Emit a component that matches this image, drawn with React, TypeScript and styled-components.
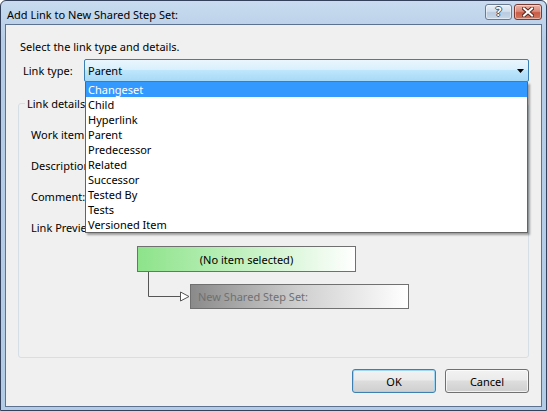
import styled, { createGlobalStyle } from "styled-components";

const GlobalStyle = createGlobalStyle`
  html, body {
    margin: 0;
    padding: 0;
    background: #ffffff;
  }
  body {
    font-family: "Noto Sans", "Segoe UI", sans-serif;
    font-size: 11px;
    color: #000;
  }
  * {
    box-sizing: border-box;
  }
`;

const Window = styled.div`
  width: 547px;
  height: 411px;
  display: flex;
  flex-direction: column;
  border: 1px solid #33425a;
  border-radius: 6px 6px 0 0;
  background: linear-gradient(#c8dbef, #b6cde7 40px, #b3cce6);
  padding: 0 4px 3px;
`;

const TitleBar = styled.div`
  height: 23px;
  display: flex;
  align-items: flex-start;
  padding: 3px 0 0 2px;
`;

const TitleText = styled.div`
  flex: 1;
  line-height: 15px;
  margin-top: 3px;
`;

const CaptionButtons = styled.div`
  display: flex;
  gap: 2px;
`;

const CaptionButton = styled.div<{ $close?: boolean }>`
  width: ${(p) => (p.$close ? 28 : 27)}px;
  height: 16px;
  border: 1px solid ${(p) => (p.$close ? "#7a3a31" : "#6a7b91")};
  border-radius: 3px;
  background: ${(p) =>
    p.$close
      ? "linear-gradient(#e9b4a8, #dc8a79 45%, #c95a45 55%, #d27a62)"
      : "linear-gradient(#e9eff7, #d3dfed 45%, #b9cadf 55%, #c9d8ea)"};
  box-shadow: inset 0 0 0 1px rgba(255, 255, 255, 0.45);
  display: flex;
  align-items: center;
  justify-content: center;
  font-weight: bold;
  font-size: 12px;
  line-height: 12px;
  color: #fff;
  text-shadow: -1px 0 #4a5566, 1px 0 #4a5566, 0 -1px #4a5566, 0 1px #4a5566;
`;

const Client = styled.div`
  flex: 1;
  background: #f0f0f0;
  border: 1px solid #5c7290;
  padding: 14px 12px 0;
  display: flex;
  flex-direction: column;
`;

const Heading = styled.div`
  line-height: 15px;
  padding-left: 2px;
`;

const TypeRow = styled.div`
  display: flex;
  align-items: center;
  margin-top: 5px;
  padding-left: 5px;
  position: relative;
  z-index: 2;
`;

const FieldLabel = styled.div<{ $width?: number }>`
  width: ${(p) => p.$width ?? 61}px;
  flex: none;
  line-height: 15px;
  white-space: nowrap;
`;

const ComboWrap = styled.div`
  flex: 1;
  position: relative;
`;

const Combo = styled.div`
  height: 23px;
  border: 1px solid #3c7fb1;
  border-radius: 2px;
  background: linear-gradient(#eaf6fd, #d9f0fc 45%, #bee6fd 50%, #a7d9f5);
  display: flex;
  align-items: center;
  justify-content: space-between;
  padding: 0 4px 0 3px;
  line-height: 15px;
`;

const DropList = styled.div`
  position: absolute;
  top: 100%;
  left: 1px;
  right: 1px;
  background: #fff;
  border: 1px solid #646464;
  border-top: none;
  box-shadow: 2px 2px 2px rgba(0, 0, 0, 0.35);
`;

const DropItem = styled.div<{ $selected?: boolean }>`
  height: 15px;
  line-height: 15px;
  padding-left: 2px;
  background: ${(p) => (p.$selected ? "#3399ff" : "transparent")};
  color: ${(p) => (p.$selected ? "#fff" : "#000")};
`;

const GroupBox = styled.fieldset`
  margin: 14px 0 0;
  padding: 0;
  height: 262px;
  border: 1px solid #d5dfe5;
  border-radius: 3px;
  min-width: 0;
`;

const Legend = styled.legend`
  margin-left: 6px;
  padding: 0 2px;
  line-height: 15px;
`;

const GroupBody = styled.div`
  padding: 8px 12px 0;
`;

const DetailRow = styled.div`
  height: 31px;
  display: flex;
  align-items: center;
`;

const Preview = styled.div`
  margin: 3px 0 0 106px;
`;

const NodeBox = styled.div<{ $tone: "green" | "gray" }>`
  width: 219px;
  height: ${(p) => (p.$tone === "green" ? 26 : 25)}px;
  border: 1px solid #707070;
  display: flex;
  align-items: center;
  justify-content: ${(p) => (p.$tone === "green" ? "center" : "flex-start")};
  padding-left: ${(p) => (p.$tone === "green" ? 0 : 7)}px;
  color: ${(p) => (p.$tone === "green" ? "#000" : "#707070")};
  background: ${(p) =>
    p.$tone === "green"
      ? "linear-gradient(90deg, #8de38a, #c4f1c2 50%, #ffffff)"
      : "linear-gradient(90deg, #8a8a8a, #cfcfcf 50%, #ffffff)"};
  line-height: 15px;
`;

const LinkRow = styled.div`
  display: flex;
  align-items: flex-start;
`;

const LinkedBox = styled(NodeBox)`
  margin-top: 12px;
`;

const Footer = styled.div`
  display: flex;
  justify-content: flex-end;
  gap: 9px;
  margin-top: 11px;
`;

const DialogButton = styled.button<{ $default?: boolean }>`
  width: 84px;
  height: 24px;
  font-family: inherit;
  font-size: 11px;
  color: #000;
  border: 1px solid ${(p) => (p.$default ? "#3c7fb1" : "#707070")};
  border-radius: 3px;
  background: linear-gradient(#f2f2f2, #ebebeb 45%, #dddddd 50%, #cfcfcf);
  box-shadow: ${(p) =>
    p.$default
      ? "inset 0 0 0 1px #9fd5f3"
      : "inset 0 0 0 1px rgba(255, 255, 255, 0.7)"};
  padding: 0;
`;

const linkTypes = [
  "Changeset",
  "Child",
  "Hyperlink",
  "Parent",
  "Predecessor",
  "Related",
  "Successor",
  "Tested By",
  "Tests",
  "Versioned Item",
];

const details = ["Work item type:", "Description:", "Comment:", "Link Preview:"];

export default function App() {
  return (
    <>
      <GlobalStyle />
      <Window>
        <TitleBar>
          <TitleText>Add Link to New Shared Step Set:</TitleText>
          <CaptionButtons>
            <CaptionButton>?</CaptionButton>
            <CaptionButton $close>
              <svg width="12" height="10" viewBox="0 0 12 10">
                <path
                  d="M2 1.5L10 8.5M10 1.5L2 8.5"
                  stroke="#5a2a22"
                  strokeWidth="4"
                  strokeLinecap="square"
                />
                <path
                  d="M2 1.5L10 8.5M10 1.5L2 8.5"
                  stroke="#ffffff"
                  strokeWidth="2"
                  strokeLinecap="square"
                />
              </svg>
            </CaptionButton>
          </CaptionButtons>
        </TitleBar>
        <Client>
          <Heading>Select the link type and details.</Heading>
          <TypeRow>
            <FieldLabel>Link type:</FieldLabel>
            <ComboWrap>
              <Combo>
                <span>Parent</span>
                <svg width="7" height="4" viewBox="0 0 7 4">
                  <path d="M0 0h7L3.5 4z" fill="#000" />
                </svg>
              </Combo>
              <DropList>
                {linkTypes.map((t, i) => (
                  <DropItem key={t} $selected={i === 0}>
                    {t}
                  </DropItem>
                ))}
              </DropList>
            </ComboWrap>
          </TypeRow>
          <GroupBox>
            <Legend>Link details</Legend>
            <GroupBody>
              {details.map((d) => (
                <DetailRow key={d}>
                  <FieldLabel $width={100}>{d}</FieldLabel>
                </DetailRow>
              ))}
              <Preview>
                <NodeBox $tone="green">(No item selected)</NodeBox>
                <LinkRow>
                  <svg width="53" height="38" viewBox="0 0 53 38">
                    <path
                      d="M11.5 0V24.5H43"
                      fill="none"
                      stroke="#555"
                      strokeWidth="1"
                    />
                    <path
                      d="M43.5 20L52 24.5L43.5 29Z"
                      fill="#fff"
                      stroke="#555"
                      strokeWidth="1"
                    />
                  </svg>
                  <LinkedBox $tone="gray">New Shared Step Set:</LinkedBox>
                </LinkRow>
              </Preview>
            </GroupBody>
          </GroupBox>
          <Footer>
            <DialogButton $default>OK</DialogButton>
            <DialogButton>Cancel</DialogButton>
          </Footer>
        </Client>
      </Window>
    </>
  );
}
